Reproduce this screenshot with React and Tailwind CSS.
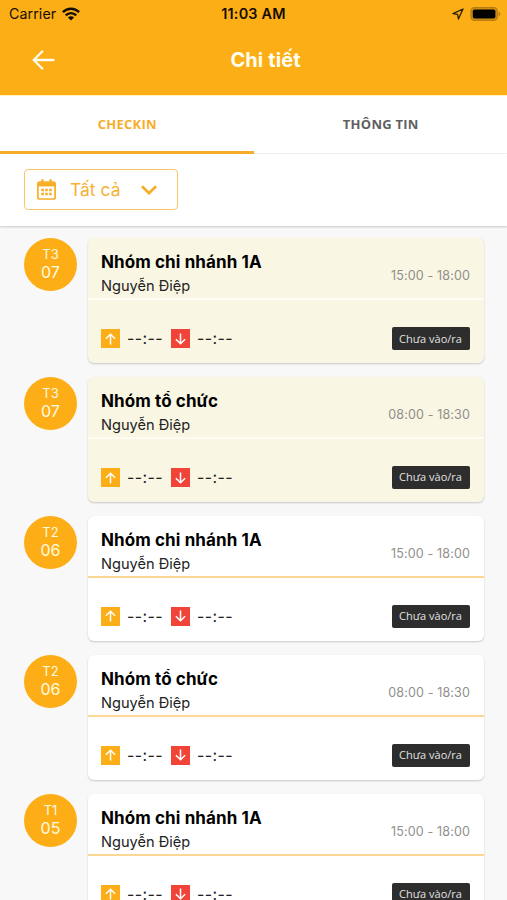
import { useState } from 'react'
import clsx from 'clsx'

const TABS = [
  { id: 'checkin', label: 'CHECKIN' },
  { id: 'info', label: 'THÔNG TIN' },
]

const SHIFTS = [
  { id: 1, weekday: 'T3', day: '07', group: 'Nhóm chi nhánh 1A', time: '15:00 - 18:00', today: true },
  { id: 2, weekday: 'T3', day: '07', group: 'Nhóm tổ chức', time: '08:00 - 18:30', today: true },
  { id: 3, weekday: 'T2', day: '06', group: 'Nhóm chi nhánh 1A', time: '15:00 - 18:00', today: false },
  { id: 4, weekday: 'T2', day: '06', group: 'Nhóm tổ chức', time: '08:00 - 18:30', today: false },
  { id: 5, weekday: 'T1', day: '05', group: 'Nhóm chi nhánh 1A', time: '15:00 - 18:00', today: false },
]

function WifiIcon() {
  return (
    <svg width="18" height="14" viewBox="0 0 18 14" fill="none" stroke="#120c02" strokeWidth="2.4">
      <path d="M0.9 5.2C5.4 0.6 12.6 0.6 17.1 5.2" />
      <path d="M3.8 8.3C6.7 5.4 11.3 5.4 14.2 8.3" />
      <path d="M9 13.6L5.9 10.4C7.6 8.7 10.4 8.7 12.1 10.4Z" fill="#120c02" stroke="none" />
    </svg>
  )
}

function StatusBar() {
  return (
    <div className="grid h-7 grid-cols-3 items-center pl-[9px] pr-[6px] text-[#120c02]">
      <div className="flex items-center gap-[6px]">
        <span className="text-[14.2px] tracking-[0.1px]">Carrier</span>
        <WifiIcon />
      </div>
      <span className="pr-[3px] text-center text-[14.4px] font-semibold tracking-[0.2px]">11:03 AM</span>
      <div className="flex items-center justify-end gap-[6px]">
        <svg width="12" height="12" viewBox="0 0 12 12" fill="none" stroke="#2b1d04" strokeWidth="1.3" strokeLinejoin="round">
          <path d="M11 1L1 5.6L5.6 6.3L6.4 11Z" />
        </svg>
        <svg width="31" height="14" viewBox="0 0 31 14">
          <rect x="0.9" y="0.6" width="26.4" height="12.8" rx="3.6" fill="#d08f15" stroke="#b67c12" strokeWidth="1.2" />
          <rect x="2.8" y="2.5" width="22.6" height="9" rx="1.8" fill="#000" />
          <path d="M28.6 4.6C30.8 5.4 30.8 8.6 28.6 9.4Z" fill="#b67c12" />
        </svg>
      </div>
    </div>
  )
}

function CalendarIcon() {
  return (
    <svg width="19" height="21" viewBox="0 0 19 21" fill="none" stroke="#f7ae25">
      <rect x="0.9" y="3" width="17.2" height="17" rx="1.8" strokeWidth="1.7" />
      <path d="M1 3.4H18V7.4H1Z" fill="#f7ae25" stroke="none" />
      <path d="M5.4 0.2V4M13.6 0.2V4" strokeWidth="2.2" />
      <path d="M4.3 10.9H14.7M4.3 15.1H14.7" strokeWidth="2.5" strokeDasharray="2.6 1.3" />
    </svg>
  )
}

function ArrowBox({ direction }) {
  const up = direction === 'up'
  return (
    <span className={clsx('flex size-[19px] items-center justify-center', up ? 'bg-[#fcae18]' : 'bg-[#f04438]')}>
      <svg width="11" height="12" viewBox="0 0 11 12" fill="none" stroke="#fff" strokeWidth="1.5" className={up ? '' : 'rotate-180'}>
        <path d="M5.5 11.5V1.3M0.9 5.8L5.5 1.2L10.1 5.8" />
      </svg>
    </span>
  )
}

function ShiftRow({ shift }) {
  return (
    <li className="flex items-start gap-[10.5px]">
      <div className="flex size-[53px] shrink-0 flex-col items-center rounded-full bg-[#fdae17] pt-[8px] text-[#fffbe0]">
        <span className="text-[13px] leading-[17px]">{shift.weekday}</span>
        <span className="text-[16px] leading-[19px]">{shift.day}</span>
      </div>
      <div
        className={clsx(
          'h-[125px] w-[396.5px] shrink-0 rounded-[6px] shadow-[0_1px_2px_rgba(0,0,0,0.2)]',
          shift.today ? 'bg-[#f9f6e3]' : 'bg-white'
        )}
      >
        <div
          className={clsx(
            'flex h-[62px] items-start justify-between border-b-2 pl-[13.5px] pr-[14px] pt-3',
            shift.today ? 'border-[#fffdf3]' : 'border-[#fbd793]'
          )}
        >
          <div>
            <h2 className="text-[17px] font-bold leading-[25px] tracking-[0.1px] text-black">{shift.group}</h2>
            <p className="text-[14.6px] leading-[23px] text-[#222]">Nguyễn Điệp</p>
          </div>
          <span className="pt-[16px] text-[12.5px] leading-[20px] tracking-[0.15px] text-[#8f8f8b]">{shift.time}</span>
        </div>
        <div className="flex items-center justify-between pl-[13.5px] pr-[14.5px] pt-[27px]">
          <div className="flex items-center text-[16px] tracking-[0.4px] text-[#222]">
            <ArrowBox direction="up" />
            <span className="ml-[7px] w-[44px] leading-[19px]">--:--</span>
            <ArrowBox direction="down" />
            <span className="ml-[7px] leading-[19px]">--:--</span>
          </div>
          <span className="flex h-[23px] w-[78px] items-center justify-center rounded-[2px] bg-[#2d2d2d] font-['Open_Sans',sans-serif] text-[11px] text-[#e2e2e2]">
            Chưa vào/ra
          </span>
        </div>
      </div>
    </li>
  )
}

export default function App() {
  const [tab, setTab] = useState('checkin')

  return (
    <div className="flex h-[900px] w-[507px] flex-col overflow-hidden bg-[#f8f8f8] font-['Inter',sans-serif]">
      <header className="h-[95px] shrink-0 bg-[#fcae17]">
        <StatusBar />
        <div className="grid h-[63px] grid-cols-[1fr_auto_1fr] items-center pl-8 pr-2">
          <button type="button" aria-label="Back" className="w-6">
            <svg width="23" height="20" viewBox="0 0 23 20" fill="none" stroke="#fffdf0" strokeWidth="2.3" strokeLinecap="round" strokeLinejoin="round">
              <path d="M21.5 10H1.8M10.2 1.5L1.7 10L10.2 18.5" />
            </svg>
          </button>
          <h1 className="text-[20px] font-bold tracking-[0.1px] text-[#fffdf0]">Chi tiết</h1>
        </div>
      </header>

      <nav className="flex h-[59px] shrink-0 border-t border-[#fff0bd] bg-white font-['Open_Sans',sans-serif]">
        {TABS.map((t) => (
          <button
            key={t.id}
            type="button"
            onClick={() => setTab(t.id)}
            className={clsx(
              'flex-1 pl-[1px] text-[13px] font-bold tracking-[0.25px]',
              tab === t.id
                ? 'border-b-[3px] border-[#f5ad29] pt-[3px] text-[#f6ae2a]'
                : 'border-b border-[#f3f3f3] pt-[1px] text-[#5f5f5f]'
            )}
          >
            {t.label}
          </button>
        ))}
      </nav>

      <div className="h-[72px] shrink-0 bg-white px-6 pt-[15px] shadow-[0_1px_2px_rgba(0,0,0,0.2)]">
        <button type="button" className="flex h-[41px] w-[154px] items-center rounded-[4px] border-[1.5px] border-[#f9c566] pl-3 text-[#f7b136]">
          <CalendarIcon />
          <span className="ml-[14px] w-[71px] pt-px text-left text-[17.5px]">Tất cả</span>
          <svg width="16" height="10" viewBox="0 0 16 10" fill="none" stroke="#f5ad29" strokeWidth="2.7">
            <path d="M1 1.2L8 8.2L15 1.2" />
          </svg>
        </button>
      </div>

      <ul className="flex flex-col gap-[13.8px] px-6 pt-[12.4px]">
        {SHIFTS.map((shift) => (
          <ShiftRow key={shift.id} shift={shift} />
        ))}
      </ul>
    </div>
  )
}
